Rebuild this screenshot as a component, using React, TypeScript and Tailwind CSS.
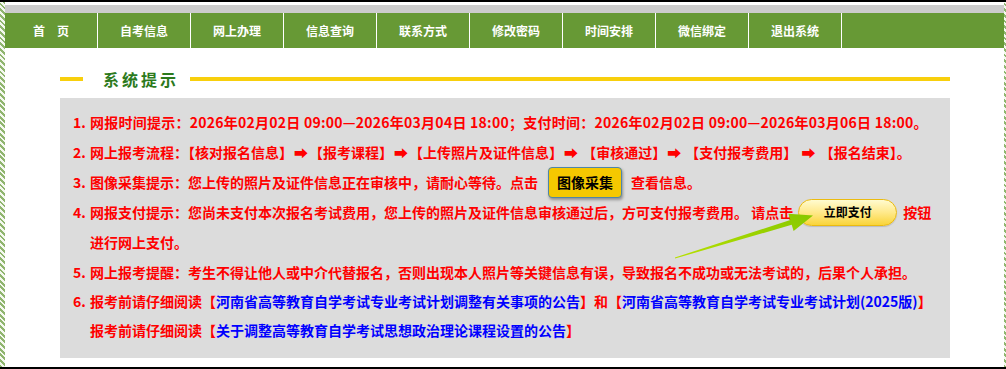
const NAV_ITEMS = ['首　页', '自考信息', '网上办理', '信息查询', '联系方式', '修改密码', '时间安排', '微信绑定', '退出系统']

function Num({ n }: { n: number }) {
  return <span className="inline-block w-[17px] tracking-normal">{n}.</span>
}

function Blue({ children }: { children: string }) {
  return (
    <>
      <span className="text-[#ff0000]">【</span>
      <span className="text-[#0000ff]">{children}</span>
      <span className="text-[#ff0000]">】</span>
    </>
  )
}

function Arrow() {
  return <span className="mx-[1px]">➡</span>
}

function GreenArrow() {
  return (
    <svg className="pointer-events-none absolute left-0 top-0 z-20" width="890" height="260" viewBox="0 0 890 260">
      <defs>
        <linearGradient id="arrowFill" x1="0" y1="1" x2="1" y2="0">
          <stop offset="0" stopColor="#b7e000" />
          <stop offset="1" stopColor="#86c800" />
        </linearGradient>
      </defs>
      <polygon
        points="614.9,159.5 730.3,122 728.4,115.8 753,117.5 733.6,133 731.7,126.8 615.1,160.5"
        fill="url(#arrowFill)"
      />
    </svg>
  )
}

export default function App() {
  return (
    <div className="flex h-[369px] w-[1006px] bg-black py-[2px] font-['Noto_Sans_CJK_SC','Noto_Sans',sans-serif]">
      <div className="w-[5px] bg-[repeating-linear-gradient(45deg,#8fb56e_0_2px,#f4f8ef_2px_4px)]" />
      <div className="flex flex-1 flex-col bg-white">
        <div className="mt-[3px] h-[8px] bg-[#cccccc]" />
        <nav className="flex h-[35px] bg-[#679935]">
          {NAV_ITEMS.map((item) => (
            <div
              key={item}
              className="flex w-[93px] items-center justify-center border-r border-white text-[12px] font-bold text-white"
            >
              {item}
            </div>
          ))}
        </nav>

        <div className="ml-[55px] w-[890px]">
          <div className="mt-[19px] flex h-[24px] items-center">
            <div className="h-[4px] w-[23px] bg-[#f8cf0c]" />
            <div className="ml-[20px] text-[16px] font-bold tracking-[3px] text-[#2c7a1c]">系统提示</div>
            <div className="ml-[11px] h-[4px] flex-1 bg-[#f8cf0c]" />
          </div>

          <div className="relative mt-[7px] h-[260px] bg-[#dcdcdc] pl-[13px] pt-[9px] text-[14px] font-bold leading-[30px] whitespace-nowrap text-[#ff0000]">
            <div className="tracking-[0.25px]">
              <Num n={1} />
              网报时间提示：2026年02月02日 09:00—2026年03月04日 18:00；支付时间：2026年02月02日 09:00—2026年03月06日 18:00。
            </div>
            <div>
              <Num n={2} />
              网上报考流程：【核对报名信息】<Arrow />【报考课程】<Arrow />【上传照片及证件信息】<Arrow /> 【审核通过】<Arrow /> 【支付报考费用】 <Arrow /> 【报名结束】。
            </div>
            <div className="flex h-[30px] items-center">
              <Num n={3} />
              <span>图像采集提示：您上传的照片及证件信息正在审核中，请耐心等待。点击</span>
              <button className="ml-[10px] mr-[9px] h-[31px] w-[74px] rounded-[4px] border border-[#4f86a8] bg-[#f5c800] text-[14px] font-bold leading-none text-black shadow-[1px_2px_3px_rgba(0,0,0,0.35)]">
                图像采集
              </button>
              <span>查看信息。</span>
            </div>
            <div className="flex h-[30px] items-center">
              <Num n={4} />
              <span>网报支付提示：您尚未支付本次报名考试费用，您上传的照片及证件信息审核通过后，方可支付报考费用。 请点击</span>
              <button className="ml-[5px] mr-[6px] h-[27px] w-[99px] rounded-full border border-[#ebbb10] bg-[linear-gradient(#fffbd0,#ffe98a_50%,#f9d43a)] text-[12px] font-bold leading-none text-black shadow-[0_1px_1px_rgba(0,0,0,0.15)]">
                立即支付
              </button>
              <span>按钮</span>
            </div>
            <div className="pl-[17px]">进行网上支付。</div>
            <div>
              <Num n={5} />
              网上报考提醒：考生不得让他人或中介代替报名，否则出现本人照片等关键信息有误，导致报名不成功或无法考试的，后果个人承担。
            </div>
            <div className="leading-[29px]">
              <Num n={6} />
              报考前请仔细阅读
              <Blue>河南省高等教育自学考试专业考试计划调整有关事项的公告</Blue>和
              <Blue>河南省高等教育自学考试专业考试计划(2025版)</Blue>
            </div>
            <div className="pl-[17px] leading-[29px]">
              报考前请仔细阅读
              <Blue>关于调整高等教育自学考试思想政治理论课程设置的公告</Blue>
            </div>
            <GreenArrow />
          </div>
        </div>
      </div>
      <div className="w-[2px] bg-[repeating-linear-gradient(45deg,#8fb56e_0_2px,#f4f8ef_2px_4px)]" />
    </div>
  )
}
